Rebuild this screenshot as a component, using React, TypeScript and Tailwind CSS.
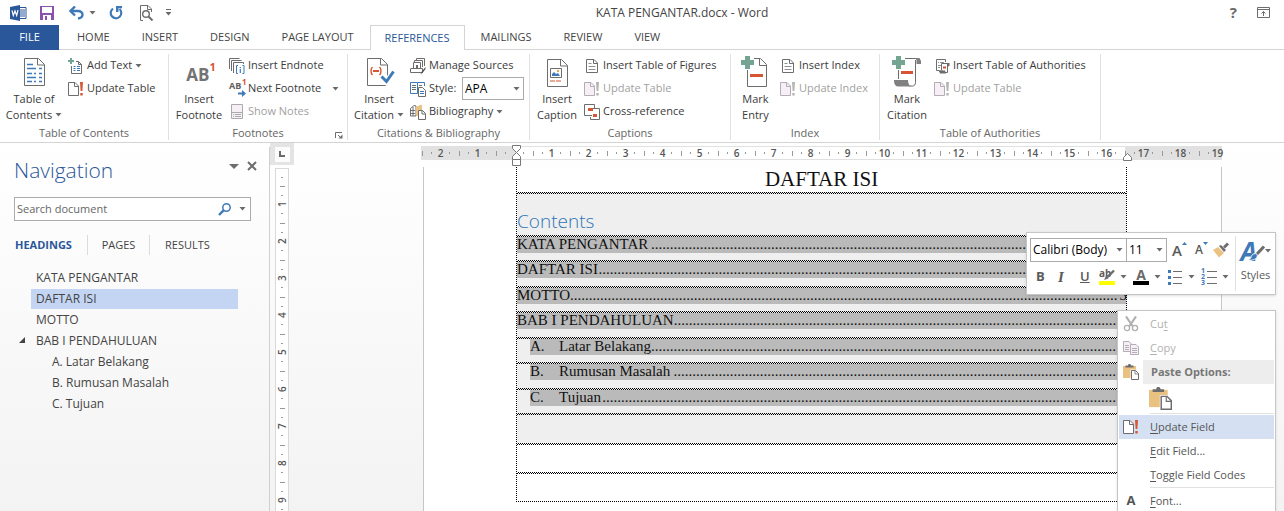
import type { ReactNode } from 'react'

const GRAY = '#6d6d6d'
const BLUE = '#3f7ab8'
const RED = '#d65532'
const GREEN = '#73a592'

function Caret({ className = '' }: { className?: string }) {
  return (
    <svg width="7" height="4" viewBox="0 0 7 4" className={`shrink-0 ${className}`}>
      <path d="M0.5 0h6L3.5 3.6z" fill="#6a6a6a" />
    </svg>
  )
}

/* ---------- title bar icons ---------- */

function WordLogo() {
  return (
    <svg width="17" height="16" viewBox="0 0 17 16">
      <path d="M9 2.5h7v11H9z" fill="#fff" stroke="#2a579a" />
      <path d="M10 5h5M10 7h5M10 9h5M10 11h5" stroke="#2a579a" />
      <path d="M0 2L10 0v16L0 14z" fill="#2a579a" />
      <path d="M2 5.3l1.300 5.2L5 6l1.700 4.5L8 5" fill="none" stroke="#fff" strokeWidth="1.2" />
    </svg>
  )
}

function SaveIcon() {
  return (
    <svg width="14" height="14" viewBox="0 0 14 14">
      <path d="M0 0h14v14H0z" fill="#8a52ac" />
      <path d="M2 1h10v6H2zM3 9h8v5H3z" fill="#fff" />
      <path d="M5 10h2v4H5z" fill="#8a52ac" />
    </svg>
  )
}

function UndoIcon() {
  return (
    <svg width="15" height="14" viewBox="0 0 15 14">
      <path d="M1.5 5H9c3 0 4.5 1.600 4.500 3.700S12 12 9 12.500" fill="none" stroke={BLUE} strokeWidth="2.4" />
      <path d="M6 0.500L1.500 5 6 9.500" fill="none" stroke={BLUE} strokeWidth="2.400" />
    </svg>
  )
}

function RedoIcon() {
  return (
    <svg width="14" height="14" viewBox="0 0 14 14">
      <path d="M4 2.600A5.300 5.300 0 1 0 10.500 3" fill="none" stroke={BLUE} strokeWidth="2.2" />
      <path d="M7 0h6v2.200h-3.500V6H7z" fill={BLUE} />
    </svg>
  )
}

function PreviewIcon() {
  return (
    <svg width="15" height="16" viewBox="0 0 15 16" fill="none" stroke={GRAY}>
      <path d="M4 15.500H1.500V.5H9l3.500 3.500v3" />
      <path d="M8.500.5v4h4" />
      <circle cx="7" cy="9" r="3.300" strokeWidth="1.400" />
      <path d="M9.500 11.500l4 4" strokeWidth="2" />
    </svg>
  )
}

/* ---------- large ribbon icons ---------- */

function TocIcon() {
  return (
    <svg width="32" height="30" viewBox="0 0 32 30" fill="none">
      <path d="M6.500 1.500h14l6 6v21h-20z" fill="#fff" stroke={GRAY} />
      <path d="M19.500 1.500v6.500h7" stroke={GRAY} />
      <path d="M9 7.500h6M9 11.500h9M9 16.500h5M9 20.500h9M9 24.500h5" stroke={BLUE} strokeWidth="1.500" />
      <path d="M21 11.500h3M21 16.500h3M21 20.500h3M21 24.500h3M16 16.500h2M16 24.500h2" stroke={BLUE} strokeWidth="1.500" />
    </svg>
  )
}

function FootnoteIcon() {
  return (
    <span className="flex h-[30px] items-center pl-1 pt-1 text-[17px] font-bold leading-none text-[#737373]">
      AB<sup className="-top-2 text-[11px] leading-none text-[#d65532]">1</sup>
    </span>
  )
}

function CitationIcon() {
  return (
    <svg width="32" height="30" viewBox="0 0 32 30" fill="none">
      <path d="M4.500 1.500h14l6 6v21h-20z" fill="#fff" stroke={GRAY} />
      <path d="M17.500 1.500v6.500h7" stroke={GRAY} />
      <path d="M9.500 10c-2 2-2 6 0 8M16.500 10c2 2 2 6 0 8" stroke={RED} strokeWidth="1.400" />
      <path d="M10 14h6" stroke={RED} strokeWidth="2" />
      <path d="M18.500 20l5 5 7-10" stroke="#fff" strokeWidth="6" />
      <path d="M18.500 19.500l5 5 7-10" stroke={BLUE} strokeWidth="3" />
    </svg>
  )
}

function CaptionIcon() {
  return (
    <svg width="32" height="30" viewBox="0 0 32 30" fill="none">
      <path d="M6.500 2.500h14l6 6v21h-20z" fill="#fff" stroke={GRAY} />
      <path d="M19.500 2.500v6.500h7" stroke={GRAY} />
      <path d="M9.500 11.500h11v9h-11z" stroke={GRAY} />
      <path d="M11 19v-2l2-2 2 2 2-1 2 3z" fill={BLUE} />
      <path d="M16 13h2v2h-2z" fill="#e8a64a" />
      <path d="M9 24h5M15 24h5" stroke={RED} strokeWidth="1.200" />
    </svg>
  )
}

function MarkEntryIcon() {
  return (
    <svg width="32" height="32" viewBox="0 0 32 32" fill="none">
      <path d="M7.500 14v16.500h19v-22l-6-6H14" stroke={GRAY} />
      <path d="M19.500 2.500v7h7" stroke={GRAY} />
      <path d="M5 0h5v4h4v5h-4v4H5V9H1V4h4z" fill={GREEN} />
      <path d="M10 18h13v3H10z" fill={RED} />
    </svg>
  )
}

function MarkCitationIcon() {
  return (
    <svg width="32" height="32" viewBox="0 0 32 32" fill="none">
      <path d="M7.500 14v9M14 2.500h12M24.500 4v22.500c0 2-1 3.500-3 3.500h-3" stroke={GRAY} />
      <path d="M24 2h4.500l1.500 3v3h-4.500V4z" fill="#808080" />
      <path d="M3 24h14c0 2 .5 5 3 6.500H7c-3 0-4-3-4-6.500z" fill="#808080" />
      <path d="M5 0h5v4h4v5h-4v4H5V9H1V4h4z" fill={GREEN} />
      <path d="M10 15h12v3H10z" fill={RED} />
    </svg>
  )
}

/* ---------- small ribbon icons ---------- */

function SmallIcon({ children, size = 16 }: { children: ReactNode; size?: number }) {
  return (
    <svg width={size} height={size} viewBox="0 0 16 16" fill="none" className="shrink-0">
      {children}
    </svg>
  )
}

function AddTextIcon() {
  return (
    <SmallIcon>
      <path d="M3.500 8v7.500h10v-9l-3-3H8M10.500 3.500v3h3" stroke={GRAY} />
      <path d="M5.500 8.500h2M5.500 10.500h2M5.500 12.500h2M9 8.500h3M9 10.500h3M9 12.500h3" stroke={BLUE} />
      <path d="M2 0h2v2h2v2H4v2H2V4H0V2h2z" fill={GREEN} />
    </SmallIcon>
  )
}

function UpdateIcon({ disabled = false }: { disabled?: boolean }) {
  const line = disabled ? '#b5adb5' : GRAY
  return (
    <SmallIcon>
      <path d="M.5 1.500H7l3.500 3.500v9.500H.5z" fill={disabled ? '#f6f0f6' : '#fff'} stroke={line} />
      <path d="M6.500 1.500v4h4" stroke={line} />
      <path d="M12 1h3l-.6 9h-1.800zM12.300 12h2.400v2.500h-2.400z" fill={disabled ? '#b5b5b5' : RED} />
    </SmallIcon>
  )
}

function EndnoteIcon() {
  return (
    <SmallIcon>
      <path d="M.5 11V.5h10M2.500 13V2.500h10M4.500 15V4.500h10V6" stroke={GRAY} />
      <path d="M9 7.500H7.500v8H9M13.500 7.500H15v8h-1.500" stroke={BLUE} />
      <path d="M10.700 9v1.200h1.200V9zM10.700 11v4h1.200v-4z" fill={BLUE} />
    </SmallIcon>
  )
}

function NextFootnoteIcon() {
  return (
    <span className="relative flex h-4 w-4 items-start text-[9px] font-bold leading-[10px] text-[#606060]">
      AB
      <span className="absolute -top-1 left-[13px] text-[8px] text-[#d65532]">1</span>
      <svg width="8" height="7" viewBox="0 0 8 7" className="absolute bottom-0 left-[9px]">
        <path d="M0 2.500h4V0l4 3.500L4 7V4.500H0z" fill={BLUE} />
      </svg>
    </span>
  )
}

function ShowNotesIcon() {
  return (
    <SmallIcon>
      <path d="M2.500.5h11v14h-11z" fill="#f6f0f6" stroke="#aaa" />
      <path d="M2 8.500h12" stroke="#aaa" />
      <path d="M4 10.500h1M6 10.500h6M4 12.500h1M6 12.500h6" stroke="#aaa" />
    </SmallIcon>
  )
}

function ManageSourcesIcon() {
  return (
    <SmallIcon>
      <path d="M1 10.500h11.500v4H.5v-4M3.500 10V4.500h7V10M4.500 4V2.500h8V9M6.500 2V.5h8V8" stroke={GRAY} />
      <path d="M6 7h2v3H6z" fill={GRAY} />
      <path d="M15.500 9l-4 5-1 2 2-1 3-4z" fill="#505050" />
    </SmallIcon>
  )
}

function StyleIcon() {
  return (
    <SmallIcon>
      <path d="M7.500 12.500H.5V1.500h7v11M7.500 1.500h7V5" stroke={BLUE} />
      <path d="M2 4.500h4M2 6.500h4M2 8.500h4M9 4.500h3" stroke={GRAY} />
      <path d="M8.500 6.500h4l3 3v6h-7z" fill="#fff" stroke={GRAY} />
      <path d="M10 10.500h4M10 12.500h4" stroke={BLUE} />
    </SmallIcon>
  )
}

function BibliographyIcon() {
  return (
    <SmallIcon>
      <path d="M.5 4.500L4 1.500 6 2v10H.5z" fill="#fff" stroke={GRAY} />
      <path d="M1 6.500h4M1 9.500h4M3 3v9" stroke={GRAY} />
      <path d="M6 3l5-2.500 1 1V7H9v5H6z" fill="#eac282" />
      <path d="M8.500 6.500h4l3 3v6h-7z" fill="#fff" stroke={GRAY} />
      <path d="M12 6.500v3.500h3.500" stroke={GRAY} />
    </SmallIcon>
  )
}

function PageListIcon() {
  return (
    <SmallIcon>
      <path d="M2.500 1.500h7.500l3.500 3.500v9.500h-11z" fill="#fff" stroke={GRAY} />
      <path d="M9.500 1.500v4h4" stroke={GRAY} />
      <path d="M4.500 5.500h3M4.500 8.500h7M4.500 11.500h7" stroke="#909090" />
    </SmallIcon>
  )
}

function CrossRefIcon() {
  return (
    <SmallIcon>
      <path d="M8 11.500H.5V.5h10V4" stroke={GRAY} />
      <path d="M9 4.500h6.500v11h-9V13" stroke={GRAY} />
      <path d="M4 4h5v3H4zM9 10h4v3H9z" fill={RED} />
    </SmallIcon>
  )
}

function AuthoritiesIcon() {
  return (
    <SmallIcon>
      <path d="M5 12.500H2.500V1.500h9V4" stroke={GRAY} />
      <path d="M4 4.500h1M6 4.500h4M4 7.500h3M4 9.500h2" stroke="#909090" />
      <path d="M7.500 12V5.500h7V8h-1v6.500h-7L5 13h4" stroke={GRAY} />
      <path d="M13 5h2.500v3H13zM5 12.500h6l1 3H6z" fill={GRAY} />
      <path d="M9 8.500h3v2H9z" fill={RED} />
    </SmallIcon>
  )
}

/* ---------- menu icons ---------- */

function CutIcon() {
  return (
    <SmallIcon>
      <path d="M3 .5l6.500 9.500M13 .5L6.500 10" stroke="#b0b0b0" strokeWidth="2.200" />
      <circle cx="4" cy="12" r="2.600" stroke="#b0b0b0" strokeWidth="1.300" />
      <circle cx="12" cy="12" r="2.600" stroke="#b0b0b0" strokeWidth="1.300" />
    </SmallIcon>
  )
}

function CopyIcon() {
  return (
    <SmallIcon>
      <path d="M.5 1.500H6l2.500 2.500v7.500h-8z" fill="#f6f0f6" stroke="#b5adb5" />
      <path d="M2 5.500h4M2 7.500h4M2 9.500h4" stroke="#b5adb5" />
      <path d="M7.500 4.500H13l2.500 2.500v7.500h-8z" fill="#f6f0f6" stroke="#b5adb5" />
      <path d="M9 8.500h5M9 10.500h5M9 12.500h5" stroke="#b5adb5" />
    </SmallIcon>
  )
}

function PasteIcon({ size = 16 }: { size?: number }) {
  return (
    <SmallIcon size={size}>
      <path d="M0 2h13v12H0z" fill="#e9c181" />
      <path d="M2.500 3.500v-2H5C5 .3 5.700 0 6.500 0S8 .3 8 1.500h2.500v2z" fill={GRAY} />
      <path d="M7.500 5.500h5l3.500 4v6.500h-8.500z" fill="#fff" />
      <path d="M8.500 6.500h4l3 3v6h-7z" fill="#fff" stroke={GRAY} />
      <path d="M12 6.500v3.500h3.500" stroke={GRAY} strokeWidth=".8" />
    </SmallIcon>
  )
}

function BrushIcon() {
  return (
    <SmallIcon>
      <path d="M0 8l5-3 6 6-5 4.500z" fill="#eac282" />
      <path d="M6 4l2-1 5 5-2 2z" fill={GRAY} />
      <path d="M10 4.500L14 .5l2 2-4 4z" fill={GRAY} />
    </SmallIcon>
  )
}

function HighlightIcon() {
  return (
    <span className="relative flex h-4 w-4 items-start">
      <span className="text-[10px] font-bold leading-[9px] text-[#5c5c5c]">ab</span>
      <svg width="16" height="16" viewBox="0 0 16 16" className="absolute inset-0">
        <path d="M0 12h16v4H0z" fill="#ffff00" />
        <path d="M15 1.500L8 8.500" stroke={GRAY} strokeWidth="2.400" />
        <path d="M7 7l2.500 2.500L5 11z" fill={GRAY} />
      </svg>
    </span>
  )
}

function FontColorIcon() {
  return (
    <span className="flex h-4 w-4 flex-col items-center border-b-4 border-black text-[14px] font-bold leading-3 text-[#6a6a6a]">
      A
    </span>
  )
}

function BulletsIcon() {
  return (
    <SmallIcon>
      <path d="M1 1h3v3H1zM1 7h3v3H1zM1 13h3v3H1z" fill={BLUE} />
      <path d="M6 2.500h9M6 8.500h9M6 14.500h9" stroke={GRAY} />
    </SmallIcon>
  )
}

function NumberingIcon() {
  return (
    <span className="flex h-4 w-4 items-center gap-[2px]">
      <span className="flex flex-col text-[7px] font-bold leading-[6px] text-[#3f7ab8]">
        <span>1</span>
        <span>2</span>
        <span>3</span>
      </span>
      <svg width="10" height="16" viewBox="0 0 10 16">
        <path d="M0 2.500h10M0 8.500h10M0 14.500h10" stroke={GRAY} />
      </svg>
    </span>
  )
}

function StylesIcon() {
  return (
    <span className="relative flex h-6 w-[30px] items-center">
      <span className="text-[26px] font-bold italic leading-6 text-[#3f7ab8]">A</span>
      <svg width="30" height="24" viewBox="0 0 30 24" className="absolute inset-0">
        <path d="M23 8l-9 9" stroke="#fff" strokeWidth="5" />
        <path d="M23 7.500L15 16" stroke={GRAY} strokeWidth="3" />
        <path d="M16 15c1 3-1 7-9 6 3-1 3-3 4-5 1-1 4-2 5-1z" fill={BLUE} stroke="#fff" strokeWidth=".8" />
        <path d="M24 10h6l-3 3.500z" fill={GRAY} />
      </svg>
    </span>
  )
}

/* ---------- ribbon parts ---------- */

interface SmallButtonProps {
  icon: ReactNode
  label: string
  caret?: boolean
  wideCaret?: boolean
  disabled?: boolean
}

function SmallButton({ icon, label, caret, wideCaret, disabled }: SmallButtonProps) {
  return (
    <button
      disabled={disabled}
      className={`flex h-[23px] items-center gap-[3px] whitespace-nowrap ${disabled ? 'text-[#9f9f9f]' : 'text-[#3b3b3b]'}`}
    >
      {icon}
      {label}
      {caret && <Caret />}
      {wideCaret && <Caret className="ml-2" />}
    </button>
  )
}

interface LargeButtonProps {
  icon: ReactNode
  lines: [string, string]
  caret?: boolean
  className: string
}

function LargeButton({ icon, lines, caret, className }: LargeButtonProps) {
  return (
    <button className={`flex h-full shrink-0 flex-col items-center justify-between pb-[3px] text-[#3b3b3b] ${className}`}>
      <span className="flex h-9 items-center">{icon}</span>
      <span className="flex flex-col items-center whitespace-nowrap leading-4">
        <span>{lines[0]}</span>
        <span className="flex items-center gap-[3px]">
          {lines[1]}
          {caret && <Caret />}
        </span>
      </span>
    </button>
  )
}

interface GroupProps {
  title: string
  className: string
  launcher?: boolean
  large: ReactNode
  children: ReactNode
}

function Group({ title, className, launcher, large, children }: GroupProps) {
  return (
    <section className={`flex h-[86px] shrink-0 flex-col border-r border-[#e1e1e1] ${className}`}>
      <div className="flex h-[72px] gap-1">
        {large}
        <div className="flex flex-col">{children}</div>
      </div>
      <div className="relative flex h-[14px] items-center justify-center text-[#666]">
        {title}
        {launcher && (
          <button aria-label={`${title} settings`} className="absolute bottom-px right-1">
            <svg width="8" height="7" viewBox="0 0 8 7" fill="none">
              <path d="M.5 6V.5H7M3 3l3 3" stroke={GRAY} />
              <path d="M7.500 2.500v4h-4z" fill={GRAY} />
            </svg>
          </button>
        )}
      </div>
    </section>
  )
}

function TitleBar() {
  return (
    <header className="flex h-[25px] items-center">
      <div className="flex w-[174px] shrink-0 items-center pl-[10px]">
        <WordLogo />
        <button aria-label="Save" className="ml-[13px]"><SaveIcon /></button>
        <button aria-label="Undo" className="ml-[15px]"><UndoIcon /></button>
        <button aria-label="Undo history" className="ml-[5px]"><Caret /></button>
        <button aria-label="Repeat" className="ml-[13px]"><RedoIcon /></button>
        <button aria-label="Print preview" className="ml-4"><PreviewIcon /></button>
        <button aria-label="Customize toolbar" className="ml-[11px] flex flex-col items-center gap-[2px]">
          <span className="h-px w-[5px] bg-[#6a6a6a]" />
          <Caret />
        </button>
      </div>
      <h1 className="flex-1 text-center text-xs text-[#444]">KATA PENGANTAR.docx - Word</h1>
      <div className="flex w-[94px] shrink-0 items-center justify-end gap-5 pr-[14px]">
        <button aria-label="Help" className="text-[15px] font-bold leading-none text-[#6a6a6a]">?</button>
        <button aria-label="Ribbon display options">
          <svg width="13" height="11" viewBox="0 0 13 11" fill="none" stroke={GRAY}>
            <path d="M.5.500h12v10H.5zM.5 2.500h12M6.500 9V4.500M4.500 6.500l2-2 2 2" />
          </svg>
        </button>
      </div>
    </header>
  )
}

const tabs = ['HOME', 'INSERT', 'DESIGN', 'PAGE LAYOUT', 'REFERENCES', 'MAILINGS', 'REVIEW', 'VIEW']

function TabBar() {
  return (
    <nav className="flex h-[25px] text-[#444]">
      <button className="w-[59px] bg-[#2a579a] text-white">FILE</button>
      <div className="w-[2px] border-b border-[#d4d4d4]" />
      {tabs.map((tab) => (
        <button
          key={tab}
          className={`border-[#d4d4d4] ${
            tab === 'REFERENCES' ? 'border-x border-t px-[14px] text-[#2a579a]' : 'border-b px-4'
          }`}
        >
          {tab}
        </button>
      ))}
      <div className="flex-1 border-b border-[#d4d4d4]" />
    </nav>
  )
}

function Ribbon() {
  return (
    <div className="flex h-[93px] border-b border-[#d4d4d4] pt-1">
      <Group
        title="Table of Contents"
        className="w-[169px]"
        large={<LargeButton className="w-16 pl-1" icon={<TocIcon />} lines={['Table of', 'Contents']} caret />}
      >
        <SmallButton icon={<AddTextIcon />} label="Add Text" caret />
        <SmallButton icon={<UpdateIcon />} label="Update Table" />
      </Group>
      <Group
        title="Footnotes"
        className="w-[179px]"
        launcher
        large={<LargeButton className="w-14 pl-1" icon={<FootnoteIcon />} lines={['Insert', 'Footnote']} />}
      >
        <SmallButton icon={<EndnoteIcon />} label="Insert Endnote" />
        <SmallButton icon={<NextFootnoteIcon />} label="Next Footnote" wideCaret />
        <SmallButton icon={<ShowNotesIcon />} label="Show Notes" disabled />
      </Group>
      <Group
        title="Citations & Bibliography"
        className="w-[182px]"
        large={<LargeButton className="w-[58px] pl-1" icon={<CitationIcon />} lines={['Insert', 'Citation']} caret />}
      >
        <SmallButton icon={<ManageSourcesIcon />} label="Manage Sources" />
        <div className="flex h-[23px] items-center gap-[3px] text-[#3b3b3b]">
          <StyleIcon />
          <label htmlFor="citation-style" className="w-[30px]">Style:</label>
          <div className="relative flex items-center">
            <select
              id="citation-style"
              className="h-[23px] w-[62px] appearance-none border border-[#ababab] bg-white pl-[2px] text-xs text-black outline-none"
            >
              <option>APA</option>
            </select>
            <Caret className="pointer-events-none absolute right-1" />
          </div>
        </div>
        <SmallButton icon={<BibliographyIcon />} label="Bibliography" caret />
      </Group>
      <Group
        title="Captions"
        className="w-[201px]"
        large={<LargeButton className="w-[50px] pl-1" icon={<CaptionIcon />} lines={['Insert', 'Caption']} />}
      >
        <SmallButton icon={<PageListIcon />} label="Insert Table of Figures" />
        <SmallButton icon={<UpdateIcon disabled />} label="Update Table" disabled />
        <SmallButton icon={<CrossRefIcon />} label="Cross-reference" />
      </Group>
      <Group
        title="Index"
        className="w-[149px]"
        large={<LargeButton className="w-[45px] pl-1" icon={<MarkEntryIcon />} lines={['Mark', 'Entry']} />}
      >
        <SmallButton icon={<PageListIcon />} label="Insert Index" />
        <SmallButton icon={<UpdateIcon disabled />} label="Update Index" disabled />
      </Group>
      <Group
        title="Table of Authorities"
        className="w-[221px]"
        large={<LargeButton className="w-[50px] pl-1" icon={<MarkCitationIcon />} lines={['Mark', 'Citation']} />}
      >
        <SmallButton icon={<AuthoritiesIcon />} label="Insert Table of Authorities" />
        <SmallButton icon={<UpdateIcon disabled />} label="Update Table" disabled />
      </Group>
    </div>
  )
}

/* ---------- navigation pane ---------- */

const headings = [
  { text: 'KATA PENGANTAR' },
  { text: 'DAFTAR ISI', selected: true },
  { text: 'MOTTO' },
  { text: 'BAB I PENDAHULUAN', open: true },
  { text: 'A. Latar Belakang', nested: true },
  { text: 'B. Rumusan Masalah', nested: true },
  { text: 'C. Tujuan', nested: true },
]

function NavigationPane() {
  return (
    <aside className="mt-1 w-[270px] shrink-0 border-r border-[#d0d0d0] text-xs text-[#444]">
      <div className="flex h-[50px] items-center pl-[14px] pr-3">
        <h2 className="flex-1 pb-[5px] text-[21px] font-light leading-6 text-[#2a579a]">Navigation</h2>
        <button aria-label="Pane options" className="mb-3">
          <svg width="10" height="5" viewBox="0 0 10 5"><path d="M0 0h10L5 5z" fill={GRAY} /></svg>
        </button>
        <button aria-label="Close" className="mb-3 ml-2">
          <svg width="10" height="10" viewBox="0 0 10 10"><path d="M1 1l8 8M9 1L1 9" stroke={GRAY} strokeWidth="2" /></svg>
        </button>
      </div>
      <div className="ml-[14px] flex h-6 w-[237px] items-center border border-[#ababab] bg-white pr-1">
        <input
          aria-label="Search document"
          placeholder="Search document"
          className="min-w-0 flex-1 pl-[2px] text-[11px] outline-none placeholder:text-[#666]"
        />
        <svg width="14" height="13" viewBox="0 0 14 13" fill="none" stroke={BLUE}>
          <circle cx="8.500" cy="4.500" r="3.700" strokeWidth="1.500" />
          <path d="M5.800 7.200L1 12" strokeWidth="2.400" />
        </svg>
        <Caret className="ml-[7px]" />
      </div>
      <div className="mt-[14px] flex h-5 items-center text-[11px]">
        <button className="w-[88px] border-r border-[#dcdcdc] pl-[15px] text-left font-bold leading-5 text-[#2a579a]">HEADINGS</button>
        <button className="w-[62px] border-r border-[#dcdcdc] leading-5">PAGES</button>
        <button className="pl-[15px] leading-5">RESULTS</button>
      </div>
      <ul className="mt-[13px] pl-[31px]">
        {headings.map((h) => (
          <li
            key={h.text}
            className={`relative mb-px flex h-5 w-[207px] items-center ${h.nested ? 'pl-[21px]' : 'pl-[5px]'} ${
              h.selected ? 'bg-[#c3d5f2]' : ''
            }`}
          >
            {h.open && (
              <svg width="6" height="6" viewBox="0 0 6 6" className="absolute -left-3 top-[6px]">
                <path d="M6 0v6H0z" fill="#444" />
              </svg>
            )}
            {h.text}
          </li>
        ))}
      </ul>
    </aside>
  )
}

/* ---------- rulers ---------- */

function VerticalRuler() {
  return (
    <div className="flex w-6 shrink-0 flex-col items-center overflow-hidden">
      <button aria-label="Tab stop" className="flex h-[22px] w-full shrink-0 items-center justify-center bg-[#e4e4e4]">
        <span className="flex h-[15px] w-[15px] items-center justify-center bg-[#fcfcfc]">
          <span className="h-[6px] w-[6px] border-b-2 border-l-2 border-[#6a6a6a]" />
        </span>
      </button>
      <div className="mt-[3px] flex w-[14px] flex-col border-x border-t border-[#d9d9d9] bg-white text-[10px] font-semibold text-[#555]">
        <div className="flex h-[17px] flex-col items-center pt-2">
          <span className="h-px w-[2px] bg-[#999]" />
        </div>
        {[1, 2, 3, 4, 5, 6, 7, 8, 9].map((n) => (
          <div key={n} className="flex h-[37px] flex-col items-center">
            <span className="h-px w-[5px] bg-[#999]" />
            <span className="mt-2 h-px w-[2px] bg-[#999]" />
            <span className="h-[17px] rotate-180 text-center leading-3 [writing-mode:vertical-rl]">{n}</span>
            <span className="h-px w-[2px] bg-[#999]" />
          </div>
        ))}
      </div>
    </div>
  )
}

const rulerCells = ['2', '1', '', '1', '2', '3', '4', '5', '6', '7', '8', '9', '10', '11', '12', '13', '14', '15', '16', '17', '18', '19']

function HorizontalRuler() {
  return (
    <div className="relative ml-[127px] mt-[3px] flex h-[14px] w-[801px] border-y border-[#e1e1e1] bg-[linear-gradient(to_right,#e1e1e1_95px,#fff_95px,#fff_704px,#e1e1e1_704px)] pl-px text-[10px] font-semibold leading-3 text-[#555]">
      {rulerCells.map((label, i) => (
        <div key={i} className="flex h-3 w-[37px] shrink-0 items-center last:w-[27px]">
          <span className="h-[5px] w-px shrink-0 bg-[#999]" />
          <span className="ml-2 h-[2px] w-px shrink-0 bg-[#999]" />
          <span className="w-[17px] shrink-0 text-center">{label}</span>
          {i < 21 && <span className="h-[2px] w-px shrink-0 bg-[#999]" />}
        </div>
      ))}
      <svg width="9" height="22" viewBox="0 0 9 22" className="absolute -top-[2px] left-[91px]" fill="#fff" stroke="#777">
        <path d="M.5.500h8v3l-4 4-4-4zM.5 14.500v-3l4-4 4 4v3zM.5 14.500h8v6h-8z" />
      </svg>
      <svg width="9" height="8" viewBox="0 0 9 8" className="absolute left-[702px] top-[6px]" fill="#fff" stroke="#777">
        <path d="M.5 7.500v-3l4-4 4 4v3z" />
      </svg>
    </div>
  )
}

/* ---------- document ---------- */

function Gridline() {
  return (
    <div className="h-[2px] shrink-0 bg-[repeating-conic-gradient(#000_0_25%,transparent_0_50%)] bg-[size:2px_2px]" />
  )
}

const toc = [
  { title: 'KATA PENGANTAR', dots: 124 },
  { title: 'DAFTAR ISI', dots: 138 },
  { title: 'MOTTO', dots: 146, page: '3' },
  { title: 'BAB I PENDAHULUAN', dots: 118 },
  { marker: 'A.', title: 'Latar Belakang', dots: 124 },
  { marker: 'B.', title: 'Rumusan Masalah', dots: 118 },
  { marker: 'C.', title: 'Tujuan', dots: 137 },
]

function Document() {
  return (
    <div className="ml-[129px] mt-[7px] w-[799px] flex-1 border-x border-[#c6c6c6] bg-white font-['Liberation_Serif',serif] text-[#111]">
      <div className="ml-[92px] w-[611px] border-x border-b border-dotted border-black">
        <h2 className="h-[25px] text-center text-[21px] leading-6">DAFTAR ISI</h2>
        <div className="bg-[#efefef]">
          <div className="flex h-[43px] flex-col justify-between">
            <Gridline />
            <h3 className="font-['Open_Sans',sans-serif] text-[19px] font-light leading-7 text-[#2e74b5]">Contents</h3>
          </div>
          <div className="flex h-[178px] flex-col">
            {toc.map((row) => (
              <div key={row.title} className="flex-1">
                <Gridline />
                <div className={`flex h-4 bg-[#bababa] text-[15px] leading-[15px] ${row.marker ? 'ml-[13px]' : ''}`}>
                  {row.marker && <span className="w-[29px]">{row.marker}</span>}
                  <span className="flex-1 whitespace-nowrap">{row.title}</span>
                  <span className="whitespace-nowrap">{'.'.repeat(row.dots)}</span>
                  <span className="w-[10px] pl-[2px]">{row.page}</span>
                </div>
              </div>
            ))}
          </div>
          <div className="h-[30px]"><Gridline /></div>
        </div>
        <div className="h-[29px]"><Gridline /></div>
        <div className="h-[29px]"><Gridline /></div>
      </div>
    </div>
  )
}

/* ---------- floating toolbar and menu ---------- */

function ComboBox({ label, value, className }: { label: string; value: string; className: string }) {
  return (
    <div className={`relative -ml-px flex items-center ${className}`}>
      <select
        aria-label={label}
        className="h-6 w-full appearance-none border border-[#ababab] bg-white pl-[2px] text-black outline-none"
      >
        <option>{value}</option>
      </select>
      <Caret className="pointer-events-none absolute right-1" />
    </div>
  )
}

function ToolButton({ label, children }: { label: string; children: ReactNode }) {
  return (
    <button aria-label={label} className="flex items-center gap-[5px]">
      {children}
      <Caret />
    </button>
  )
}

function MiniToolbar() {
  return (
    <div className="absolute left-[1026px] top-[232px] flex h-[63px] w-[250px] border border-[#c6c6c6] bg-white pl-1 text-[#5a5a5a] shadow-sm">
      <div className="w-[204px] pt-[5px]">
        <div className="flex items-center">
          <ComboBox label="Font" value="Calibri (Body)" className="w-[97px] text-xs" />
          <ComboBox label="Font size" value="11" className="w-[41px] text-xs" />
          <button aria-label="Grow font" className="relative ml-[5px] w-[15px] text-left text-[15px] font-semibold leading-6">
            A
            <svg width="5" height="3" viewBox="0 0 5 3" className="absolute right-0 top-1"><path d="M0 3h5L2.500 0z" fill={BLUE} /></svg>
          </button>
          <button aria-label="Shrink font" className="relative ml-2 w-[13px] text-left text-[12px] font-semibold leading-6">
            A
            <svg width="5" height="3" viewBox="0 0 5 3" className="absolute right-0 top-1"><path d="M0 0h5L2.500 3z" fill={BLUE} /></svg>
          </button>
          <button aria-label="Format painter" className="ml-[5px]"><BrushIcon /></button>
        </div>
        <div className="mt-[5px] flex h-5 items-center gap-[6px] pl-[5px] text-[13px]">
          <button aria-label="Bold" className="w-4 text-left font-bold">B</button>
          <button aria-label="Italic" className="w-4 text-left font-['Liberation_Serif',serif] text-[15px] font-bold italic">I</button>
          <button aria-label="Underline" className="w-[13px] text-left font-semibold underline">U</button>
          <ToolButton label="Highlight"><HighlightIcon /></ToolButton>
          <ToolButton label="Font color"><FontColorIcon /></ToolButton>
          <ToolButton label="Bullets"><BulletsIcon /></ToolButton>
          <ToolButton label="Numbering"><NumberingIcon /></ToolButton>
        </div>
      </div>
      <button className="my-[3px] flex flex-1 flex-col items-center justify-between border-l border-[#e1e1e1] pb-2 pt-[3px] leading-4">
        <StylesIcon />
        Styles
      </button>
    </div>
  )
}

interface MenuItemProps {
  label: string
  accessKey: number
  icon?: ReactNode
  disabled?: boolean
  active?: boolean
}

function MenuItem({ label, accessKey, icon, disabled, active }: MenuItemProps) {
  return (
    <button
      disabled={disabled}
      className={`flex h-6 w-full items-center text-left ${active ? 'bg-[#d5e1f2]' : ''} ${disabled ? 'text-[#b1b1b1]' : 'text-[#555]'}`}
    >
      <span className="flex w-[31px] justify-center pr-[7px]">{icon}</span>
      <span>
        {label.slice(0, accessKey)}
        <span className="underline underline-offset-2">{label[accessKey]}</span>
        {label.slice(accessKey + 1)}
      </span>
    </button>
  )
}

function ContextMenu() {
  return (
    <div className="absolute left-[1117px] top-[310px] w-[159px] border border-[#c6c6c6] bg-white p-px shadow-sm">
      <MenuItem label="Cut" accessKey={2} icon={<CutIcon />} disabled />
      <MenuItem label="Copy" accessKey={0} icon={<CopyIcon />} disabled />
      <div className="flex h-6 items-center">
        <span className="flex w-6 justify-center"><PasteIcon /></span>
        <span className="flex-1 bg-[#ededed] pl-2 font-bold leading-6 text-[#777]">Paste Options:</span>
      </div>
      <button aria-label="Paste" className="flex h-[29px] items-center pl-[30px]"><PasteIcon size={23} /></button>
      <div className="mb-px ml-[31px] h-px bg-[#e1e1e1]" />
      <MenuItem label="Update Field" accessKey={0} icon={<UpdateIcon />} active />
      <MenuItem label="Edit Field..." accessKey={0} />
      <MenuItem label="Toggle Field Codes" accessKey={0} />
      <div className="mb-px ml-[31px] h-px bg-[#e1e1e1]" />
      <MenuItem
        label="Font..."
        accessKey={0}
        icon={<span className="text-[13px] font-bold">A</span>}
      />
    </div>
  )
}

export default function App() {
  return (
    <div className="relative flex h-screen flex-col overflow-hidden bg-white font-['Open_Sans',sans-serif] text-[11px]">
      <TitleBar />
      <TabBar />
      <Ribbon />
      <div className="flex min-h-0 flex-1 bg-linear-to-b from-white to-[#f3f3f3]">
        <NavigationPane />
        <VerticalRuler />
        <main className="flex min-w-0 flex-1 flex-col">
          <HorizontalRuler />
          <Document />
        </main>
      </div>
      <MiniToolbar />
      <ContextMenu />
    </div>
  )
}
